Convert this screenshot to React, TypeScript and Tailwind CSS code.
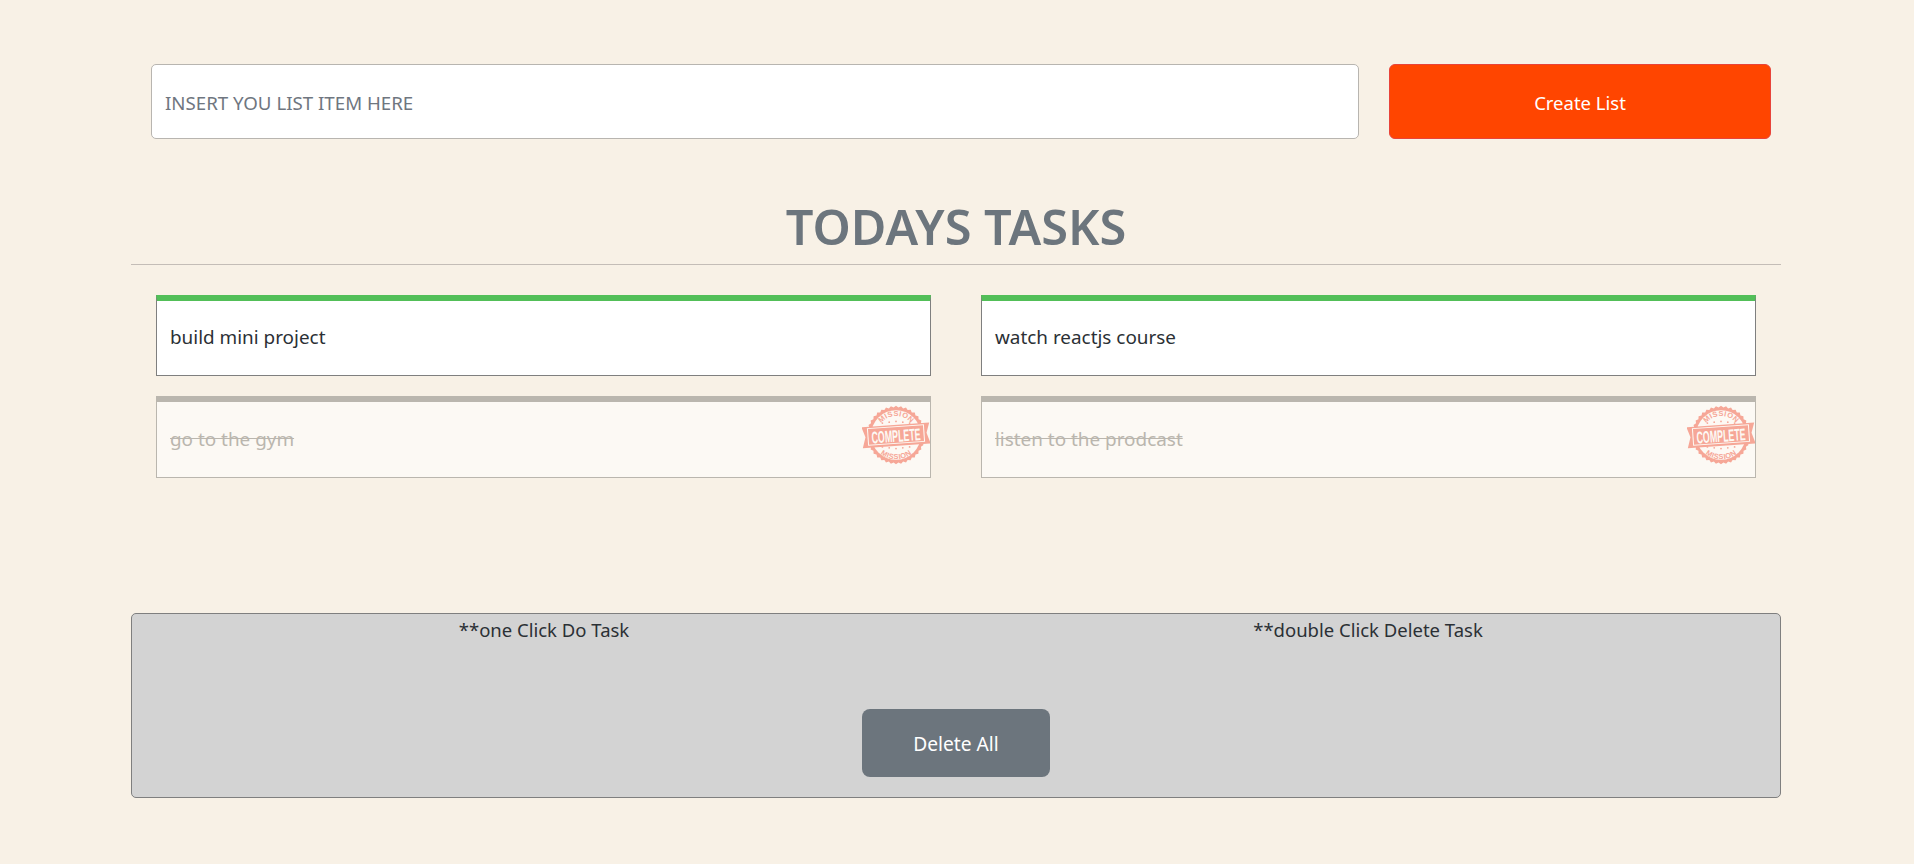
import React from "react";

const tasks = [
  { id: 1, label: "build mini project", done: false },
  { id: 2, label: "watch reactjs course", done: false },
  { id: 3, label: "go to the gym", done: true },
  { id: 4, label: "listen to the prodcast", done: true },
];

const INK = "#f6a797";
const PAPER = "#fdf9f4";

// scalloped edge of the stamp
function sealPath() {
  const pts: string[] = [];
  const n = 72;
  for (let i = 0; i < n; i++) {
    const r = i % 2 === 0 ? 43 : 40.5;
    const a = (i / n) * Math.PI * 2;
    pts.push(`${(50 + r * Math.cos(a)).toFixed(2)},${(50 + r * Math.sin(a)).toFixed(2)}`);
  }
  return pts.join(" ");
}

function Stamp({ id }: { id: string }) {
  const stars = [-20, -10, 0, 10, 20];
  return (
    <svg viewBox="0 0 100 100" className="absolute top-[-1px] right-0 h-[68px] w-[68px]">
      <polygon points={sealPath()} fill={INK} />
      <circle cx="50" cy="50" r="36.5" fill={PAPER} />
      <defs>
        <path id={`${id}-top`} d="M 22 50 A 28 28 0 0 1 78 50" />
        <path id={`${id}-bottom`} d="M 14 50 A 36 36 0 0 0 86 50" />
      </defs>
      <text fontFamily="'Liberation Sans', sans-serif" fontWeight="700" fontSize="11" fill={INK} textAnchor="middle">
        <textPath href={`#${id}-top`} startOffset="50%" textLength="50" lengthAdjust="spacing">MISSION</textPath>
      </text>
      <text fontFamily="'Liberation Sans', sans-serif" fontWeight="700" fontSize="11" fill={INK} textAnchor="middle">
        <textPath href={`#${id}-bottom`} startOffset="50%" textLength="50" lengthAdjust="spacing">MISSION</textPath>
      </text>
      {stars.map((dx) => (
        <g key={dx}>
          <circle cx={50 + dx} cy={30 + Math.abs(dx) * 0.12} r="1.3" fill={INK} />
          <circle cx={50 + dx} cy={70 - Math.abs(dx) * 0.12} r="1.3" fill={INK} />
        </g>
      ))}
      <g transform="rotate(-4 50 50)">
        <polygon points="0,35 100,35 95,50 100,66 0,66 5,50" fill={INK} />
        <rect x="8" y="37" width="84" height="26" fill={PAPER} />
        <rect x="9.5" y="38.5" width="81" height="23" fill={INK} />
        <text transform="translate(50 60) scale(1 1.9)" fontFamily="'Liberation Sans', sans-serif" fontWeight="700" fontSize="13" fill={PAPER} textAnchor="middle">
          COMPLETE
        </text>
      </g>
    </svg>
  );
}

function TaskCard({ id, label, done }: { id: number; label: string; done: boolean }) {
  if (done) {
    return (
      <div className="relative flex h-[82px] items-center border border-t-[6px] border-[#bab6ae] bg-[#fcf9f4] pb-[1px] pl-[13px] text-[18.9px] text-[#bab6ae] line-through">
        {label}
        <Stamp id={`stamp-${id}`} />
      </div>
    );
  }
  return (
    <div className="flex h-[81px] items-center border border-t-[6px] border-[#7f7f7f] border-t-[#52bf58] bg-white pb-[2px] pl-[13px] text-[18.9px] text-[#2b3035]">
      {label}
    </div>
  );
}

export default function App() {
  return (
    <div className="min-h-[864px] bg-[#f8f1e6] pt-[64px] font-['Noto_Sans',sans-serif]">
      <div className="ml-[131px] w-[1650px]">
        <div className="flex gap-[30px] pr-[10px] pl-[20px]">
          <input
            readOnly
            placeholder="INSERT YOU LIST ITEM HERE"
            className="h-[75px] w-[1208px] rounded-[5px] border border-[#b8b5b0] bg-white px-[13px] pt-[1px] text-[18.7px] outline-none placeholder:text-[#6f7680]"
          />
          <button className="h-[75px] w-[382px] rounded-[6px] border border-[#e8433a] bg-[#ff4500] pt-[2px] text-[18.5px] text-white">
            Create List
          </button>
        </div>

        <h1 className="mt-[55px] border-b border-[#c4bdb7] pb-[6px] text-center text-[48.7px] leading-[64px] font-semibold text-[#6c757d]">
          TODAYS TASKS
        </h1>

        <div className="mt-[30px] grid grid-cols-[775px_775px] gap-x-[50px] gap-y-[20px] px-[25px]">
          {tasks.map((t) => (
            <TaskCard key={t.id} id={t.id} label={t.label} done={t.done} />
          ))}
        </div>

        <div className="mt-[135px] flex h-[185px] flex-col items-center rounded-[5px] border border-[#7f7f7f] bg-[#d3d3d3] pt-[2px] pb-[20px] text-[18.5px] text-[#2b3035]">
          <div className="grid w-full grid-cols-2 text-center">
            <p>**one Click Do Task</p>
            <p>**double Click Delete Task</p>
          </div>
          <button className="mt-auto h-[68px] w-[188px] rounded-[8px] bg-[#6c757d] pt-[2px] text-[19.2px] text-white">
            Delete All
          </button>
        </div>
      </div>
    </div>
  );
}
